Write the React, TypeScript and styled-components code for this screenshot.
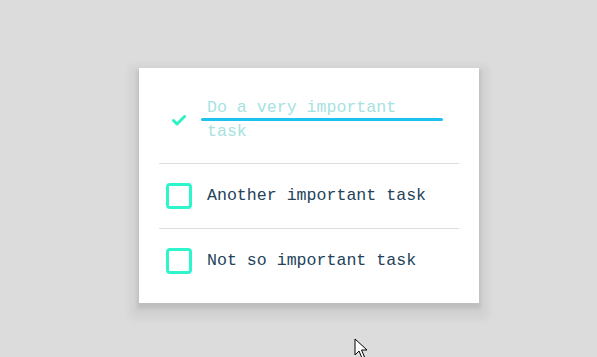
import React, { useState } from 'react';
import styled, { createGlobalStyle } from 'styled-components';

type Task = { id: number; text: string; done: boolean };

const initialTasks: Task[] = [
  { id: 1, text: 'Do a very important task', done: true },
  { id: 2, text: 'Another important task', done: false },
  { id: 3, text: 'Not so important task', done: false },
];

function App() {
  const [tasks, setTasks] = useState(initialTasks);

  const toggle = (id: number) =>
    setTasks((prev) => prev.map((t) => (t.id === id ? { ...t, done: !t.done } : t)));

  return (
    <Page>
      <GlobalStyle />
      <Card>
        {tasks.map((task) => (
          <Row key={task.id} onClick={() => toggle(task.id)}>
            <Box done={task.done}>
              {task.done && (
                <svg width="14" height="11" viewBox="0 0 14 11">
                  <path d="M1.5 5.5 L5 9 L12.5 1.5" fill="none" stroke="#2ef2c4" strokeWidth="3" strokeLinecap="round" strokeLinejoin="round" />
                </svg>
              )}
            </Box>
            <Label done={task.done}>
              {task.text}
              {task.done && <Strike />}
            </Label>
          </Row>
        ))}
      </Card>
      <Cursor width="14" height="22" viewBox="0 0 14 22">
        <path d="M1 1 L1 17 L5 13 L8 20 L10.5 19 L7.5 12 L13 12 Z" fill="#fff" stroke="#000" strokeWidth="1" strokeLinejoin="miter" />
      </Cursor>
    </Page>
  );
}

export default App;

const GlobalStyle = createGlobalStyle`
  html, body {
    margin: 0;
    padding: 0;
    background: #dcdcdc;
  }
`;

const Page = styled.div`
  position: relative;
  width: 597px;
  height: 357px;
  box-sizing: border-box;
  padding: 68px 0 0 139px;
  font-family: 'Liberation Mono', 'DejaVu Sans Mono', monospace;
  overflow: hidden;
`;

const Card = styled.div`
  width: 340px;
  box-sizing: border-box;
  padding: 9px 20px 10px;
  background: #fff;
  box-shadow: 0 4px 3px 2px rgba(0, 0, 0, 0.08), 0 7px 8px 9px rgba(0, 0, 0, 0.05);
`;

const Row = styled.div`
  display: flex;
  align-items: center;
  gap: 15px;
  padding: 19px 0 19px 7px;
  cursor: pointer;
  & + & {
    border-top: 1px solid #dddddd;
  }
`;

const Box = styled.div<{ done: boolean }>`
  flex: none;
  width: 26px;
  height: 26px;
  box-sizing: border-box;
  border: ${(p) => (p.done ? 'none' : '3px solid #2ef5cc')};
  border-radius: 4px;
  display: flex;
  align-items: center;
  justify-content: center;
`;

const Label = styled.div<{ done: boolean }>`
  position: relative;
  max-width: 236px;
  font-size: 16.6px;
  line-height: 24px;
  color: ${(p) => (p.done ? '#a6e2e2' : '#23435a')};
`;

const Strike = styled.span`
  position: absolute;
  left: -6px;
  right: 0;
  top: 22px;
  height: 3px;
  border-radius: 2px;
  background: #1dc2ef;
`;

const Cursor = styled.svg`
  position: absolute;
  left: 354px;
  top: 338px;
`;
